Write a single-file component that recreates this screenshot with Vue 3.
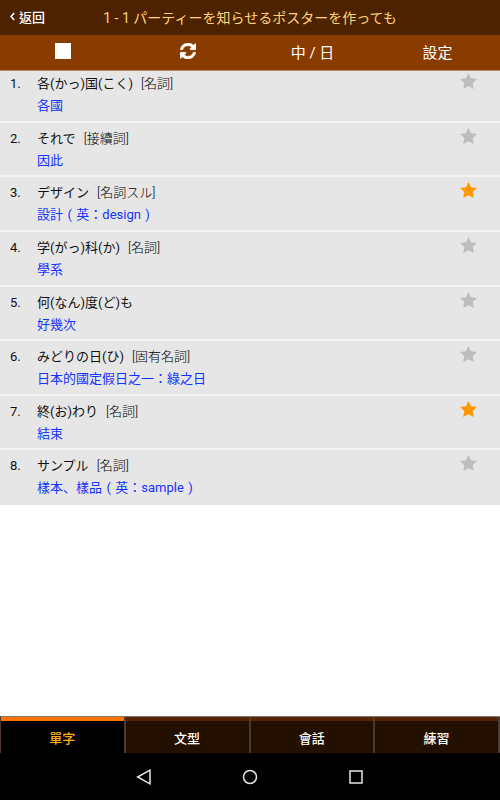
<template>
  <div class="app">
    <header class="header">
      <button class="header__back" type="button">
        <svg viewBox="0 0 5 9" aria-hidden="true">
          <path d="M4.2 1 1 4.5 4.2 8" fill="none" stroke="currentColor" stroke-width="1.6" />
        </svg>
        返回
      </button>
      <h1 class="header__title" lang="ja">1 - 1 パーティーを知らせるポスターを作っても</h1>
    </header>

    <div class="toolbar">
      <button class="toolbar__btn" type="button" aria-label="停止">
        <svg class="icon-stop" viewBox="0 0 16 16"><rect width="16" height="16" fill="currentColor" /></svg>
      </button>
      <button class="toolbar__btn" type="button" aria-label="重複">
        <svg class="icon-refresh" viewBox="0 128 1536 1536">
          <path fill="currentColor" stroke="currentColor" stroke-width="50" d="M1511 1056q0 5-1 7-64 268-268 434.5t-478 166.5q-146 0-282.5-55t-243.5-157l-129 129q-19 19-45 19t-45-19-19-45v-448q0-26 19-45t45-19h448q26 0 45 19t19 45-19 45l-137 137q71 66 161 102t187 36q134 0 250-65t186-179q11-17 53-117 8-23 30-23h192q13 0 22.5 9.5t9.5 22.5zm25-800v448q0 26-19 45t-45 19h-448q-26 0-45-19t-19-45 19-45l138-138q-148-137-349-137-134 0-250 65t-186 179q-11 17-53 117-8 23-30 23h-199q-13 0-22.5-9.5t-9.5-22.5v-7q65-268 270-434.5t480-166.5q146 0 284 55.5t245 156.5l130-129q19-19 45-19t45 19 19 45z" />
        </svg>
      </button>
      <button class="toolbar__btn" type="button">中 / 日</button>
      <button class="toolbar__btn" type="button">設定</button>
    </div>

    <main class="content">
      <ol class="words">
        <li v-for="(word, i) in words" :key="word.text" class="word">
          <span class="word__num">{{ i + 1 }}.</span>
          <div class="word__body">
            <div class="word__text" lang="ja">{{ word.text }}<span v-if="word.type" class="word__type">[{{ word.type }}]</span></div>
            <div class="word__meaning">{{ word.meaning }}</div>
          </div>
          <button
            class="word__star"
            :class="{ 'word__star--on': word.starred }"
            type="button"
            aria-label="收藏"
            :aria-pressed="word.starred"
            @click="word.starred = !word.starred"
          >
            <svg viewBox="0 0 17 16">
              <path fill="currentColor" d="M8.5 0 11 5.3 17 6.1 12.7 10.1 13.8 16 8.5 13.2 3.2 16 4.3 10.1 0 6.1 6 5.3z" />
            </svg>
          </button>
        </li>
      </ol>
    </main>

    <nav class="tabs">
      <button
        v-for="tab in tabs"
        :key="tab"
        class="tab"
        :class="{ 'tab--active': tab === activeTab }"
        type="button"
        @click="activeTab = tab"
      >{{ tab }}</button>
    </nav>

    <div class="sysbar">
      <button type="button" aria-label="Back">
        <svg viewBox="0 0 16 16"><path d="M14 1.2v13.6L1.6 8z" /></svg>
      </button>
      <button type="button" aria-label="Home">
        <svg viewBox="0 0 16 16"><circle cx="8" cy="8" r="6.5" /></svg>
      </button>
      <button type="button" aria-label="Recent">
        <svg viewBox="0 0 16 16"><rect x="2" y="2" width="12" height="12" /></svg>
      </button>
    </div>
  </div>
</template>

<script setup>
import { ref } from 'vue'

// \u2004 is a third-of-an-em space, set around the brackets
const words = ref([
  { text: '各(かっ)国(こく)', type: '名詞', meaning: '各國', starred: false },
  { text: 'それで', type: '接續詞', meaning: '因此', starred: false },
  { text: 'デザイン', type: '名詞スル', meaning: '設計\u2004(\u2004英：design\u2004)', starred: true },
  { text: '学(がっ)科(か)', type: '名詞', meaning: '學系', starred: false },
  { text: '何(なん)度(ど)も', type: '', meaning: '好幾次', starred: false },
  { text: 'みどりの日(ひ)', type: '固有名詞', meaning: '日本的國定假日之一：綠之日', starred: false },
  { text: '終(お)わり', type: '名詞', meaning: '結束', starred: true },
  { text: 'サンプル', type: '名詞', meaning: '樣本、樣品\u2004(\u2004英：sample\u2004)', starred: false },
])

const tabs = ['單字', '文型', '會話', '練習']
const activeTab = ref('單字')
</script>

<style>
body {
  margin: 0;
  background: #fff;
}
</style>

<style scoped>
.app {
  display: flex;
  flex-direction: column;
  height: 100vh;
  font-family: Roboto, "Noto Sans CJK TC", sans-serif;
  font-size: 13px;
}

button {
  margin: 0;
  padding: 0;
  border: none;
  background: none;
  color: inherit;
  font: inherit;
  cursor: pointer;
}

svg { display: block; }

.header {
  display: grid;
  grid-template-columns: 1fr auto 1fr;
  align-items: center;
  box-sizing: border-box;
  height: 35px;
  padding: 0 10px 2px;
  background: #4d2200;
  color: #fff;
}

.header__back {
  display: flex;
  align-items: center;
  justify-self: start;
  gap: 4px;
  font-weight: 500;
}

.header__back svg { width: 5px; height: 9px; }

.header__title {
  margin: 0;
  font-family: Roboto, "Noto Sans CJK JP", sans-serif;
  font-size: 14px;
  font-weight: 400;
  color: #ffd57a;
  white-space: nowrap;
}

.toolbar {
  display: grid;
  grid-template-columns: repeat(4, 1fr);
  box-sizing: border-box;
  height: 36px;
  padding-bottom: 3px;
  border-bottom: 1px solid #b98a6c;
  background: #8a3c00;
  color: #fff;
  font-size: 15px;
}

.toolbar__btn {
  display: flex;
  align-items: center;
  justify-content: center;
}

.icon-stop,
.icon-refresh { width: 16px; height: 16px; }

.content {
  flex: 1;
  min-height: 0;
  overflow: hidden;
}

/* the list is scrolled down slightly under the toolbar */
.words {
  display: grid;
  min-height: 437px;
  margin: -3px 0 0;
  padding: 0;
  list-style: none;
}

.word {
  display: flex;
  align-items: flex-start;
  box-sizing: border-box;
  padding: 5px 23px 3px 10px;
  border-bottom: 2px solid #f3f3f3;
  background: #e6e6e6;
  line-height: 22px;
  color: #111;
}

.word:last-child { border-bottom-color: #e6e6e6; }

.word__num { width: 27px; }
.word__body { flex: 1; }

.word__text { font-family: Roboto, "Noto Sans CJK JP", sans-serif; }
.word__type { margin-left: 8px; color: #000; font-weight: 300; }
.word__meaning { font-family: Roboto, "Noto Sans CJK JP", "Noto Sans CJK TC", sans-serif; color: #1433ff; }

.word__star { color: #bdbdbd; }
.word__star--on { color: #ff9800; }
.word__star svg { width: 17px; height: 16px; }

.tabs {
  display: grid;
  grid-template-columns: repeat(4, 1fr);
  box-sizing: border-box;
  height: 37px;
  border-top: 1px solid #857870;
  border-left: 1px solid #4a3a30;
  background: #241000;
}

.tab {
  padding-top: 4px;
  border-right: 2px solid #4a3a30;
  background: #241000;
  box-shadow: inset 0 4px #572300;
  color: #fff;
  font-weight: 500;
}

.tab--active {
  background: #000;
  box-shadow: inset 0 4px #ff7300;
  color: #ffb310;
}

.sysbar {
  display: flex;
  align-items: center;
  justify-content: center;
  gap: 90px;
  height: 47px;
  background: #000;
}

.sysbar svg {
  width: 16px;
  height: 16px;
  fill: none;
  stroke: #e6e6e6;
  stroke-width: 1.5;
}
</style>
